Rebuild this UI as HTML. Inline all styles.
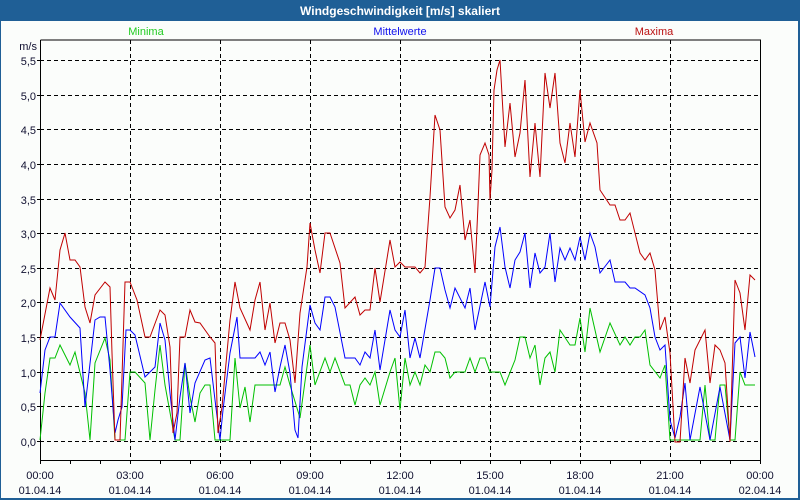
<!DOCTYPE html>
<html><head><meta charset="utf-8"><style>
html,body{margin:0;padding:0;background:#fbfdfb;}
body{width:800px;height:500px;overflow:hidden;position:relative;font-family:"Liberation Sans",sans-serif;}
</style></head><body>
<svg width="800" height="500" xmlns="http://www.w3.org/2000/svg" style="position:absolute;left:0;top:0" font-family="Liberation Sans, sans-serif">
<rect x="0" y="0" width="800" height="500" fill="#fbfdfb"/>
<rect x="0" y="0" width="800" height="21" fill="#1f5f96"/>
<rect x="0" y="0" width="1" height="500" fill="#1f5f96"/>
<rect x="798" y="0" width="2" height="500" fill="#1f5f96"/>
<rect x="0" y="498" width="800" height="2" fill="#1f5f96"/>
<text x="400" y="15" text-anchor="middle" fill="#fff" font-weight="bold" font-size="12">Windgeschwindigkeit [m/s] skaliert</text>
<text x="146" y="35" text-anchor="middle" fill="#22cc22" font-size="11">Minima</text>
<text x="400" y="35" text-anchor="middle" fill="#1010ee" font-size="11">Mittelwerte</text>
<text x="654" y="35" text-anchor="middle" fill="#bb1111" font-size="11">Maxima</text>
<g stroke="#000" stroke-width="1" stroke-dasharray="4,3" fill="none">
<path d="M40 60.5H760M40 95.5H760M40 129.5H760M40 164.5H760M40 199.5H760M40 233.5H760M40 268.5H760M40 302.5H760M40 337.5H760M40 372.5H760M40 406.5H760M40 441.5H760"/>
<path d="M130.5 40V460M220.5 40V460M310.5 40V460M400.5 40V460M490.5 40V460M580.5 40V460M670.5 40V460"/>
</g>
<g stroke="#000" stroke-width="1" fill="none">
<path d="M40.5 40V460.5H760.5V40H40.5"/>
<path d="M37 60.5H40M37 95.5H40M37 129.5H40M37 164.5H40M37 199.5H40M37 233.5H40M37 268.5H40M37 302.5H40M37 337.5H40M37 372.5H40M37 406.5H40M37 441.5H40"/>
<path d="M40.5 460V464M70.5 460V464M100.5 460V464M130.5 460V464M160.5 460V464M190.5 460V464M220.5 460V464M250.5 460V464M280.5 460V464M310.5 460V464M340.5 460V464M370.5 460V464M400.5 460V464M430.5 460V464M460.5 460V464M490.5 460V464M520.5 460V464M550.5 460V464M580.5 460V464M610.5 460V464M640.5 460V464M670.5 460V464M700.5 460V464M730.5 460V464M760.5 460V464"/>
</g>
<g font-size="11" fill="#101030" text-anchor="end">
<text x="37" y="50">m/s</text>
<text x="36" y="65">5,5</text><text x="36" y="100">5,0</text><text x="36" y="134">4,5</text><text x="36" y="169">4,0</text><text x="36" y="204">3,5</text><text x="36" y="238">3,0</text><text x="36" y="273">2,5</text><text x="36" y="307">2,0</text><text x="36" y="342">1,5</text><text x="36" y="377">1,0</text><text x="36" y="411">0,5</text><text x="36" y="446">0,0</text>
</g>
<g font-size="11" fill="#101030" text-anchor="middle">
<text x="40" y="479">00:00</text><text x="130" y="479">03:00</text><text x="220" y="479">06:00</text><text x="310" y="479">09:00</text><text x="400" y="479">12:00</text><text x="490" y="479">15:00</text><text x="580" y="479">18:00</text><text x="670" y="479">21:00</text><text x="760" y="479">00:00</text>
<text x="40" y="494">01.04.14</text><text x="130" y="494">01.04.14</text><text x="220" y="494">01.04.14</text><text x="310" y="494">01.04.14</text><text x="400" y="494">01.04.14</text><text x="490" y="494">01.04.14</text><text x="580" y="494">01.04.14</text><text x="670" y="494">01.04.14</text><text x="760" y="494">02.04.14</text>
</g>
<g fill="none" stroke-width="1">
<polyline stroke="#00c000" points="40,440 45,393 50,358 55,358 60,345 70,365 75,352 85,393 90,440 95,363 105,338 110,360 115,440 125,440 130,372 135,372 145,383 150,440 155,390 160,345 165,385 175,440 180,440 185,363 190,397 195,422 200,393 205,385 210,385 215,440 230,440 235,358 240,408 245,387 250,422 255,385 280,385 285,367 290,385 300,418 310,345 315,385 325,358 330,372 335,358 345,385 350,385 355,405 360,385 365,378 370,385 375,372 380,405 390,372 395,358 400,410 405,358 410,385 415,372 420,385 425,365 430,372 435,352 440,352 445,358 450,378 455,372 465,372 470,358 475,372 480,358 485,358 490,372 500,372 505,385 515,360 520,337 525,337 530,358 535,345 540,385 545,358 550,352 555,372 560,330 570,345 575,345 580,318 585,352 590,308 600,352 610,323 620,345 625,337 630,345 635,337 640,337 645,330 650,365 660,378 665,365 670,440 700,440 705,385 710,440 715,440 720,385 725,385 730,440 735,440 740,372 745,385 755,385"/>
<polyline stroke="#0000ff" points="40,393 45,350 50,337 55,337 60,303 70,317 80,328 85,407 95,320 100,317 105,317 110,370 115,433 118,420 122,407 126,330 130,330 135,335 145,377 155,367 160,323 165,340 170,393 175,440 180,397 185,363 190,413 195,383 205,360 210,358 215,400 220,440 223,410 230,353 237,317 240,358 255,358 260,352 265,365 270,352 275,392 280,367 285,345 290,373 295,430 298,438 302,367 310,305 315,323 320,330 325,297 330,297 335,307 345,358 355,358 360,365 365,352 370,358 375,330 380,370 390,310 395,330 400,337 405,310 410,358 415,338 420,358 430,300 435,268 440,268 445,290 450,308 455,288 465,308 470,288 475,330 485,282 490,307 495,247 500,227 505,267 510,288 515,260 520,252 525,233 530,288 535,253 540,273 545,267 550,233 555,282 560,248 565,260 570,248 575,260 580,237 585,260 590,233 595,247 600,273 610,260 615,282 625,282 630,288 635,288 645,295 650,308 655,337 660,350 665,345 670,420 675,438 680,417 685,383 690,440 700,387 710,440 720,387 730,440 735,343 740,337 745,378 750,332 755,357"/>
<polyline stroke="#c00000" points="40,340 50,288 55,300 60,250 65,233 70,260 75,260 80,267 85,307 90,323 95,295 105,282 110,287 112,353 115,440 120,440 125,282 130,282 137,300 145,337 150,337 160,310 165,315 170,347 173,433 177,413 180,337 185,337 190,310 195,322 200,323 210,337 215,343 218,433 222,407 230,320 235,282 240,308 250,330 255,300 260,282 265,330 270,303 275,343 280,323 285,323 290,340 295,383 300,313 307,267 310,223 315,250 320,273 325,233 330,233 340,263 345,308 355,297 360,315 365,310 370,310 375,268 380,302 390,240 395,267 400,262 405,267 415,267 420,273 425,267 430,197 435,115 440,130 445,207 450,218 455,210 460,185 465,240 470,220 475,273 478,205 480,155 485,143 489,155 490,200 492,170 494,90 497,70 500,60 505,147 510,103 515,157 520,133 525,80 530,177 535,123 540,177 545,73 550,108 555,73 560,143 565,163 570,123 575,157 580,90 585,142 590,123 597,143 600,190 610,205 615,205 620,220 625,220 630,213 640,253 645,260 650,253 655,270 660,330 665,317 670,353 675,442 680,442 685,358 690,383 695,350 705,330 710,383 715,345 720,350 725,363 730,442 735,280 740,293 745,330 750,275 755,280"/>
</g>
</svg>
</body></html>
